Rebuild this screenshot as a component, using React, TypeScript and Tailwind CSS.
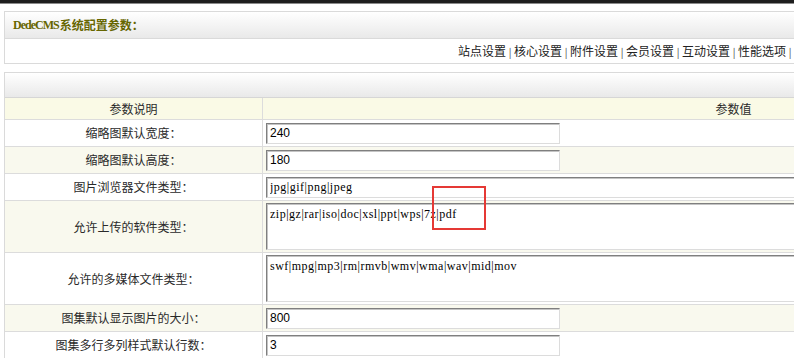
import React from "react";

const cjk = "font-['Noto_Sans_CJK_SC','Noto_Sans',sans-serif]";
const inputCls =
  "h-[21px] border border-t-[#7f7f7f] border-l-[#7f7f7f] border-r-[#dcdcdc] border-b-[#dcdcdc] shadow-[inset_1px_1px_0_#c4c4c4] bg-white px-[3px] text-[12px] text-black outline-none";
const serifVal = "font-['Liberation_Serif',serif] tracking-[0.5px]";
const sansVal = "font-['Liberation_Sans',Arial,sans-serif]";

function Row({
  label,
  cream,
  tall,
  children,
}: {
  label: string;
  cream?: boolean;
  tall?: boolean;
  children: React.ReactNode;
}) {
  return (
    <div
      className={`flex border-b border-[#dcdcdc] ${tall ? "h-[52px]" : "h-[27px]"} ${
        cream ? "bg-[#f9f9ee]" : "bg-white"
      }`}
    >
      <div
        className={`w-[258px] shrink-0 border-r border-[#dcdcdc] flex items-center justify-center text-[12px] text-[#2a2a2a] ${cjk}`}
      >
        {label}
      </div>
      <div className="flex-1 flex items-center pl-[3px]">{children}</div>
    </div>
  );
}

function TextInput({ value, wide, serif }: { value: string; wide?: boolean; serif?: boolean }) {
  return (
    <input
      readOnly
      value={value}
      className={`${inputCls} ${wide ? "w-[900px]" : "w-[294px]"} ${serif ? serifVal : sansVal}`}
    />
  );
}

function Area({ value }: { value: string }) {
  return (
    <textarea
      readOnly
      value={value}
      className={`h-[47px] w-[900px] resize-none border border-t-[#7f7f7f] border-l-[#7f7f7f] border-r-[#dcdcdc] border-b-[#dcdcdc] shadow-[inset_1px_1px_0_#c4c4c4] bg-white px-[3px] pt-[3px] text-[12px] leading-[14px] text-black outline-none overflow-hidden ${serifVal}`}
    />
  );
}

const navItems = ["站点设置", "核心设置", "附件设置", "会员设置", "互动设置", "性能选项"];

export default function App() {
  return (
    <div className="relative w-[794px] h-[358px] overflow-hidden bg-white">
      <div className="h-[3px] bg-[#1e1e1e]" />
      <div className="h-[1px] bg-[#8a8a8a]" />
      <div className="w-[1200px] ml-[4px] mt-[7px]">
        {/* Panel 1 */}
        <div className="border border-[#dadada]">
          <div className="h-[27px] bg-linear-to-b from-[#ffffff] to-[#e9e9e9] border-b border-[#dadada] flex items-center pl-[8px]">
            <span className="font-bold text-[#666600] text-[12px] flex items-center">
              <span className="font-['Liberation_Serif',serif] tracking-[-1px] mr-[1px]">DedeCMS</span>
              <span className={cjk}>系统配置参数：</span>
            </span>
          </div>
          <div className={`h-[24px] bg-white flex items-center pl-[453px] text-[12px] text-[#222] ${cjk}`}>
            {navItems.map((n) => (
              <React.Fragment key={n}>
                <span className="whitespace-nowrap">{n}</span>
                <span className="w-[8px] text-center text-[10px] text-[#444]">|</span>
              </React.Fragment>
            ))}
          </div>
        </div>

        {/* Panel 2 */}
        <div className="mt-[8px] border-l border-t border-[#dadada]">
          <div className="h-[25px] bg-linear-to-b from-[#ffffff] to-[#e9e9e9] border-b border-[#d6d6d6]" />
          <div className={`flex h-[22px] border-b border-[#dcdcdc] bg-[#fafae6] text-[12px] text-[#2a2a2a] ${cjk}`}>
            <div className="w-[258px] shrink-0 border-r border-[#dcdcdc] flex items-center justify-center">
              参数说明
            </div>
            <div className="flex-1 flex items-center justify-center">参数值</div>
          </div>
          <Row label="缩略图默认宽度：">
            <TextInput value="240" />
          </Row>
          <Row label="缩略图默认高度：" cream>
            <TextInput value="180" />
          </Row>
          <Row label="图片浏览器文件类型：">
            <TextInput value="jpg|gif|png|jpeg" wide serif />
          </Row>
          <Row label="允许上传的软件类型：" cream tall>
            <Area value="zip|gz|rar|iso|doc|xsl|ppt|wps|7z|pdf" />
          </Row>
          <Row label="允许的多媒体文件类型：" tall>
            <Area value="swf|mpg|mp3|rm|rmvb|wmv|wma|wav|mid|mov" />
          </Row>
          <Row label="图集默认显示图片的大小：" cream>
            <TextInput value="800" />
          </Row>
          <Row label="图集多行多列样式默认行数：">
            <TextInput value="3" />
          </Row>
        </div>
      </div>

      {/* annotation box */}
      <div className="absolute left-[432px] top-[186px] w-[54px] h-[44px] border-2 border-[#e53935]" />
    </div>
  );
}
